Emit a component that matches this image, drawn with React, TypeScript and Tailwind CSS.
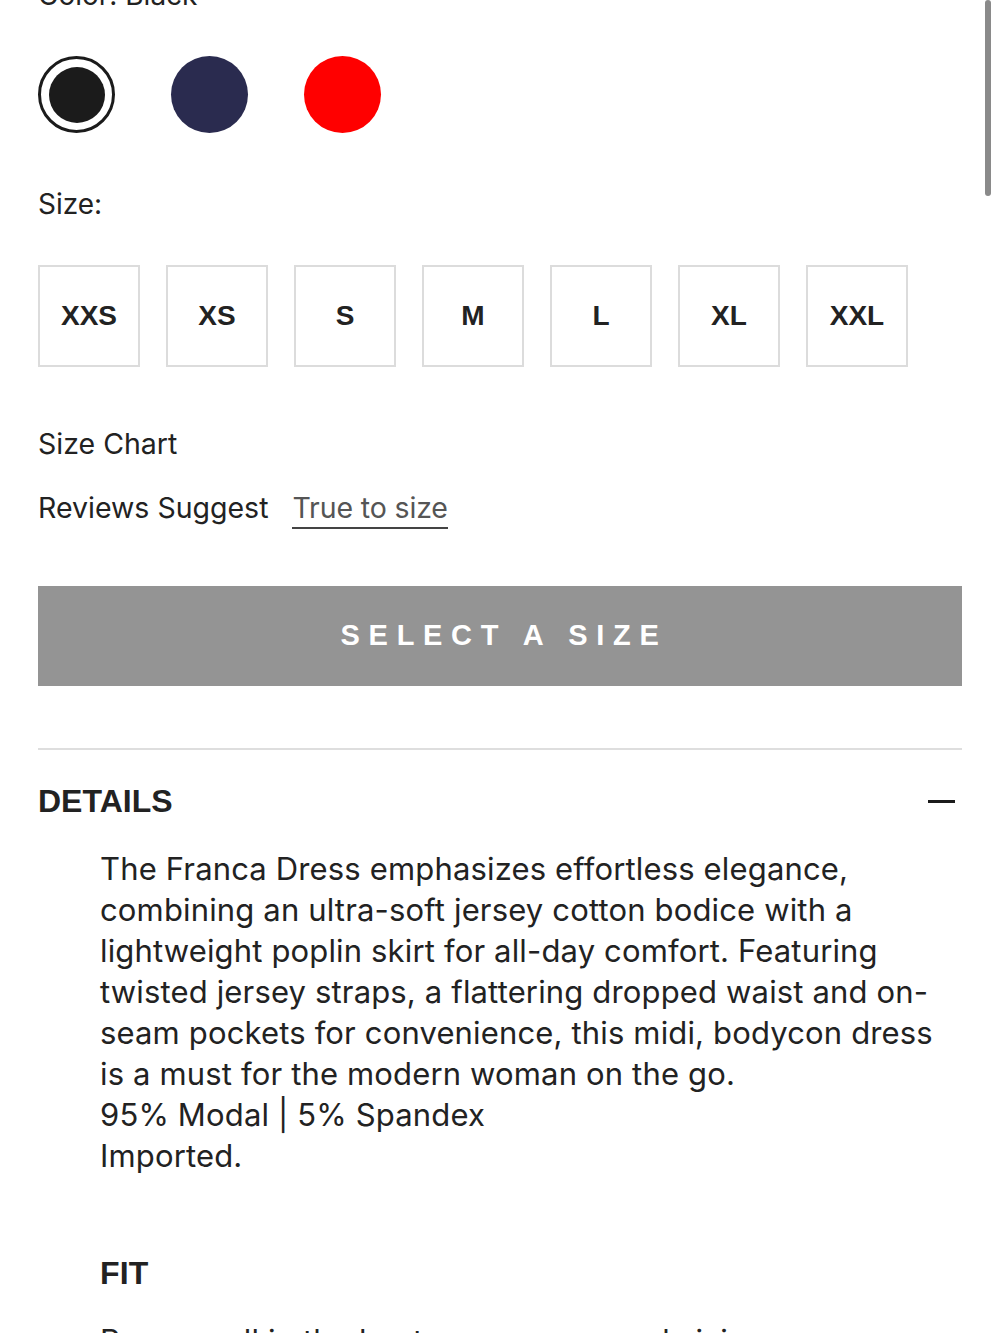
const sizes = ['XXS', 'XS', 'S', 'M', 'L', 'XL', 'XXL']

const swatches = [
  { name: 'Black', color: 'bg-[#1b1b1b]', selected: true },
  { name: 'Navy', color: 'bg-[#2a2b4f]', selected: false },
  { name: 'Red', color: 'bg-[#ff0000]', selected: false },
]

const details = [
  'The Franca Dress emphasizes effortless elegance,',
  'combining an ultra-soft jersey cotton bodice with a',
  'lightweight poplin skirt for all-day comfort. Featuring',
  'twisted jersey straps, a flattering dropped waist and on-',
  'seam pockets for convenience, this midi, bodycon dress',
  'is a must for the modern woman on the go.',
  '95% Modal | 5% Spandex',
  'Imported.',
]

export default function App() {
  return (
    <div className="relative w-[1000px] h-[1333px] overflow-hidden bg-white text-[#222] font-['Inter','Roboto',sans-serif]">
      {/* fake scrollbar */}
      <div className="absolute right-[9px] top-0 w-[6px] h-[196px] rounded-full bg-[#8a8a8a]" />

      <div className="px-[38px] -mt-[22px]">
        <p className="text-[28px] leading-[34px]">Color: Black</p>

        {/* swatches */}
        <div className="flex gap-[56px] mt-[44px]">
          {swatches.map((s) =>
            s.selected ? (
              <div key={s.name} className="w-[77px] h-[77px] rounded-full border-[3px] border-[#1b1b1b] flex items-center justify-center">
                <div className={`w-[56px] h-[56px] rounded-full ${s.color}`} />
              </div>
            ) : (
              <div key={s.name} className={`w-[77px] h-[77px] rounded-full ${s.color}`} />
            )
          )}
        </div>

        <p className="text-[28px] leading-[34px] mt-[54px]">Size:</p>

        {/* size boxes */}
        <div className="flex gap-[26px] mt-[44px]">
          {sizes.map((s) => (
            <div
              key={s}
              className="w-[102px] h-[102px] border-2 border-[#dcdcdc] flex items-center justify-center font-['Liberation_Sans',sans-serif] font-bold text-[28px] text-[#222]"
            >
              {s}
            </div>
          ))}
        </div>

        <p className="text-[28.5px] leading-[34px] mt-[60px]">Size Chart</p>
        <div className="flex items-start gap-[24px] mt-[30px] text-[28.5px] leading-[34px]">
          <span>Reviews Suggest</span>
          <span className="text-[#555] border-b-2 border-[#444] pb-[2px] tracking-[-0.005em]">True to size</span>
        </div>

        <button className="w-[924px] h-[100px] bg-[#949494] mt-[57px] flex items-center justify-center text-white font-['Liberation_Sans',sans-serif] font-bold text-[29px] tracking-[0.3em] pl-[8px]">
          SELECT A SIZE
        </button>

        <div className="w-[924px] h-[2px] bg-[#dedede] mt-[62px]" />

        {/* details accordion */}
        <div className="flex items-center justify-between w-[924px] mt-[32px] pr-[7px]">
          <h2 className="font-['Liberation_Sans',sans-serif] font-bold text-[32px] leading-[38px]">DETAILS</h2>
          <div className="w-[27px] h-[3px] bg-[#1b1b1b]" />
        </div>

        <div className="pl-[62px] mt-[28px] text-[31px] leading-[41px] tracking-[0.005em] text-[#222]">
          {details.map((line) => (
            <p key={line} className="whitespace-nowrap">{line}</p>
          ))}

          <h3 className="font-['Liberation_Sans',sans-serif] font-bold text-[32px] leading-[38px] mt-[78px]">FIT</h3>
          <p className="mt-[28px] whitespace-nowrap">Runs small in the bust, we recommend sizing up.</p>
        </div>
      </div>
    </div>
  )
}
